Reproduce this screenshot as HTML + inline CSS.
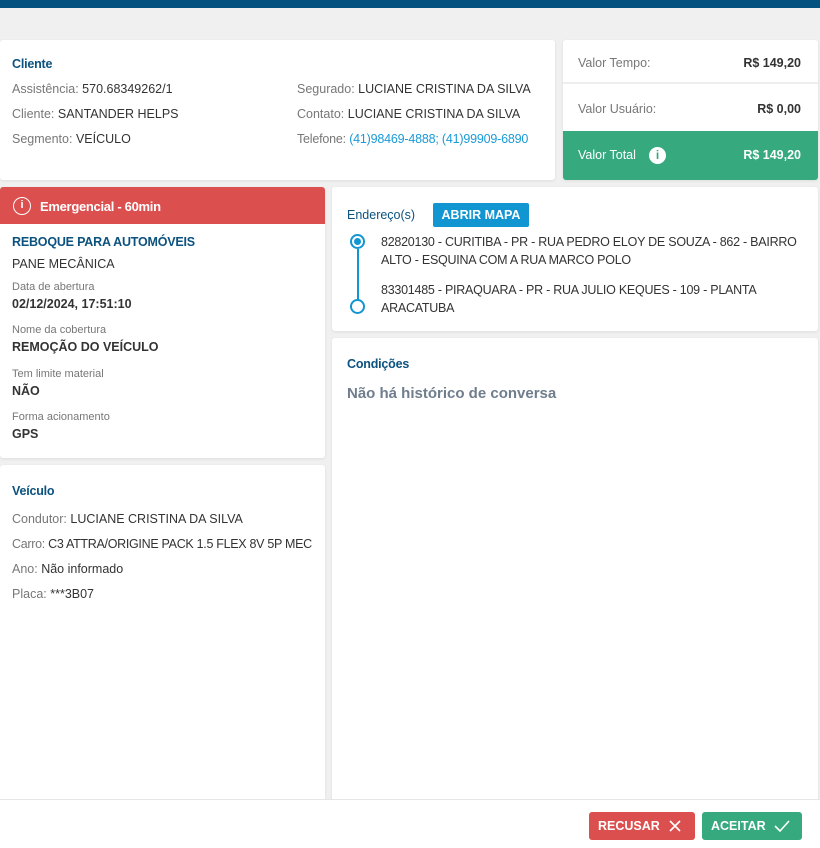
<!DOCTYPE html>
<html><head><meta charset="utf-8"><style>
*{box-sizing:border-box;margin:0;padding:0}
body{width:820px;height:848px;background:#f0f0f0;font-family:"Liberation Sans",sans-serif;font-size:12.5px;color:#333;position:relative;overflow:hidden}
.card{position:absolute;background:#fff;border-radius:3px;box-shadow:0 1px 3px rgba(0,0,0,.08)}
.t{color:#0b527f;font-weight:bold;font-size:12.5px;letter-spacing:-.2px}
.l{color:#777}
.ab{position:absolute;white-space:nowrap}
.sm{font-size:11px;color:#777}
.b{font-weight:bold;color:#333}
</style></head><body>
<div class="ab" style="left:0;top:0;width:820px;height:8px;background:#03517f"></div>

<div class="card" style="left:0;top:40px;width:555px;height:140px">
<div class="ab t" style="left:12px;top:17px">Cliente</div>
<div class="ab" style="left:12px;top:42px"><span class="l">Assistência:</span> 570.68349262/1</div>
<div class="ab" style="left:12px;top:67px"><span class="l">Cliente:</span> SANTANDER HELPS</div>
<div class="ab" style="left:12px;top:92px"><span class="l">Segmento:</span> VEÍCULO</div>
<div class="ab" style="left:297px;top:42px"><span class="l">Segurado:</span> LUCIANE CRISTINA DA SILVA</div>
<div class="ab" style="left:297px;top:67px"><span class="l">Contato:</span> LUCIANE CRISTINA DA SILVA</div>
<div class="ab" style="left:297px;top:92px;letter-spacing:-.2px"><span class="l">Telefone:</span> <span style="color:#1a9ad6">(41)98469-4888; (41)99909-6890</span></div>
</div>

<div class="card" style="left:563px;top:40px;width:255px;height:140px;overflow:hidden">
<div class="ab" style="left:0;top:0;width:255px;height:44px;border-bottom:2px solid #eee"></div>
<div class="ab l" style="left:15px;top:16px">Valor Tempo:</div>
<div class="ab b" style="right:17px;top:16px">R$ 149,20</div>
<div class="ab l" style="left:15px;top:62px">Valor Usuário:</div>
<div class="ab b" style="right:17px;top:62px">R$ 0,00</div>
<div class="ab" style="left:0;top:91px;width:255px;height:49px;background:#36a97f"></div>
<div class="ab" style="left:15px;top:108px;color:#fff">Valor Total</div>
<div class="ab" style="left:86px;top:107px;width:17px;height:17px;border-radius:50%;background:#fff;color:#36a97f;font-weight:bold;font-size:12px;text-align:center;line-height:17px">i</div>
<div class="ab" style="right:17px;top:108px;color:#fff;font-weight:bold">R$ 149,20</div>
</div>

<div class="card" style="left:0;top:187px;width:325px;height:271px;overflow:hidden">
<div class="ab" style="left:0;top:0;width:325px;height:37px;background:#dc4f4f"></div>
<div class="ab" style="left:13px;top:10px;width:18px;height:18px;border:1.6px solid #fff;border-radius:50%;color:#fff;font-size:11px;font-weight:bold;text-align:center;line-height:15px">i</div>
<div class="ab" style="left:40px;top:12px;color:#fff;font-weight:bold;font-size:13px;letter-spacing:-.3px">Emergencial - 60min</div>
<div class="ab t" style="left:12px;top:48px">REBOQUE PARA AUTOMÓVEIS</div>
<div class="ab" style="left:12px;top:70px">PANE MECÂNICA</div>
<div class="ab sm" style="left:12px;top:94px">Data de abertura</div>
<div class="ab b" style="left:12px;top:110px">02/12/2024, 17:51:10</div>
<div class="ab sm" style="left:12px;top:137px">Nome da cobertura</div>
<div class="ab b" style="left:12px;top:153px">REMOÇÃO DO VEÍCULO</div>
<div class="ab sm" style="left:12px;top:181px">Tem limite material</div>
<div class="ab b" style="left:12px;top:197px">NÃO</div>
<div class="ab sm" style="left:12px;top:224px">Forma acionamento</div>
<div class="ab b" style="left:12px;top:240px">GPS</div>
</div>

<div class="card" style="left:0;top:465px;width:325px;height:340px">
<div class="ab t" style="left:12px;top:19px">Veículo</div>
<div class="ab" style="left:12px;top:47px"><span class="l">Condutor:</span> LUCIANE CRISTINA DA SILVA</div>
<div class="ab" style="left:12px;top:72px;letter-spacing:-.3px"><span class="l">Carro:</span> C3 ATTRA/ORIGINE PACK 1.5 FLEX 8V 5P MEC</div>
<div class="ab" style="left:12px;top:97px"><span class="l">Ano:</span> Não informado</div>
<div class="ab" style="left:12px;top:122px"><span class="l">Placa:</span> ***3B07</div>
</div>

<div class="card" style="left:332px;top:187px;width:486px;height:144px">
<div class="ab" style="left:15px;top:21px;color:#0b527f">Endereço(s)</div>
<div class="ab" style="left:101px;top:16px;width:96px;height:24px;background:#1196d2;border-radius:2px;color:#fff;font-weight:bold;text-align:center;line-height:24px;font-size:12.5px">ABRIR MAPA</div>
<div class="ab" style="left:18px;top:47px;width:15px;height:15px;border:2px solid #1196d2;border-radius:50%"></div>
<div class="ab" style="left:22px;top:51px;width:7px;height:7px;background:#1196d2;border-radius:50%"></div>
<div class="ab" style="left:24.5px;top:62px;width:2px;height:51px;background:#1196d2"></div>
<div class="ab" style="left:18px;top:112px;width:15px;height:15px;border:2px solid #1196d2;border-radius:50%"></div>
<div class="ab" style="left:49px;top:46px;line-height:18px;white-space:normal;width:420px;letter-spacing:-.25px">82820130 - CURITIBA - PR - RUA PEDRO ELOY DE SOUZA - 862 - BAIRRO ALTO - ESQUINA COM A RUA MARCO POLO</div>
<div class="ab" style="left:49px;top:94px;line-height:18px;white-space:normal;width:400px;letter-spacing:-.25px">83301485 - PIRAQUARA - PR - RUA JULIO KEQUES - 109 - PLANTA ARACATUBA</div>
</div>

<div class="card" style="left:332px;top:338px;width:486px;height:470px">
<div class="ab t" style="left:15px;top:19px">Condições</div>
<div class="ab" style="left:15px;top:47px;color:#6f7d8c;font-weight:bold;font-size:15px">Não há histórico de conversa</div>
</div>

<div class="ab" style="left:0;top:799px;width:820px;height:49px;background:#fff;border-top:1px solid #e6e6e6"></div>
<div class="ab" style="left:589px;top:812px;width:106px;height:28px;background:#dc4f4f;border-radius:3px;color:#fff;font-weight:bold;line-height:28px;padding-left:9px">RECUSAR
<svg style="position:absolute;left:80px;top:8px" width="12" height="12" viewBox="0 0 12 12"><path d="M1 1L11 11M11 1L1 11" stroke="#fff" stroke-width="1.6"/></svg></div>
<div class="ab" style="left:702px;top:812px;width:100px;height:28px;background:#36a97f;border-radius:3px;color:#fff;font-weight:bold;line-height:28px;padding-left:9px">ACEITAR
<svg style="position:absolute;left:72px;top:8px" width="16" height="12" viewBox="0 0 16 12"><path d="M1 6L6 11L15 1" stroke="#fff" stroke-width="1.6" fill="none"/></svg></div>
</body></html>
